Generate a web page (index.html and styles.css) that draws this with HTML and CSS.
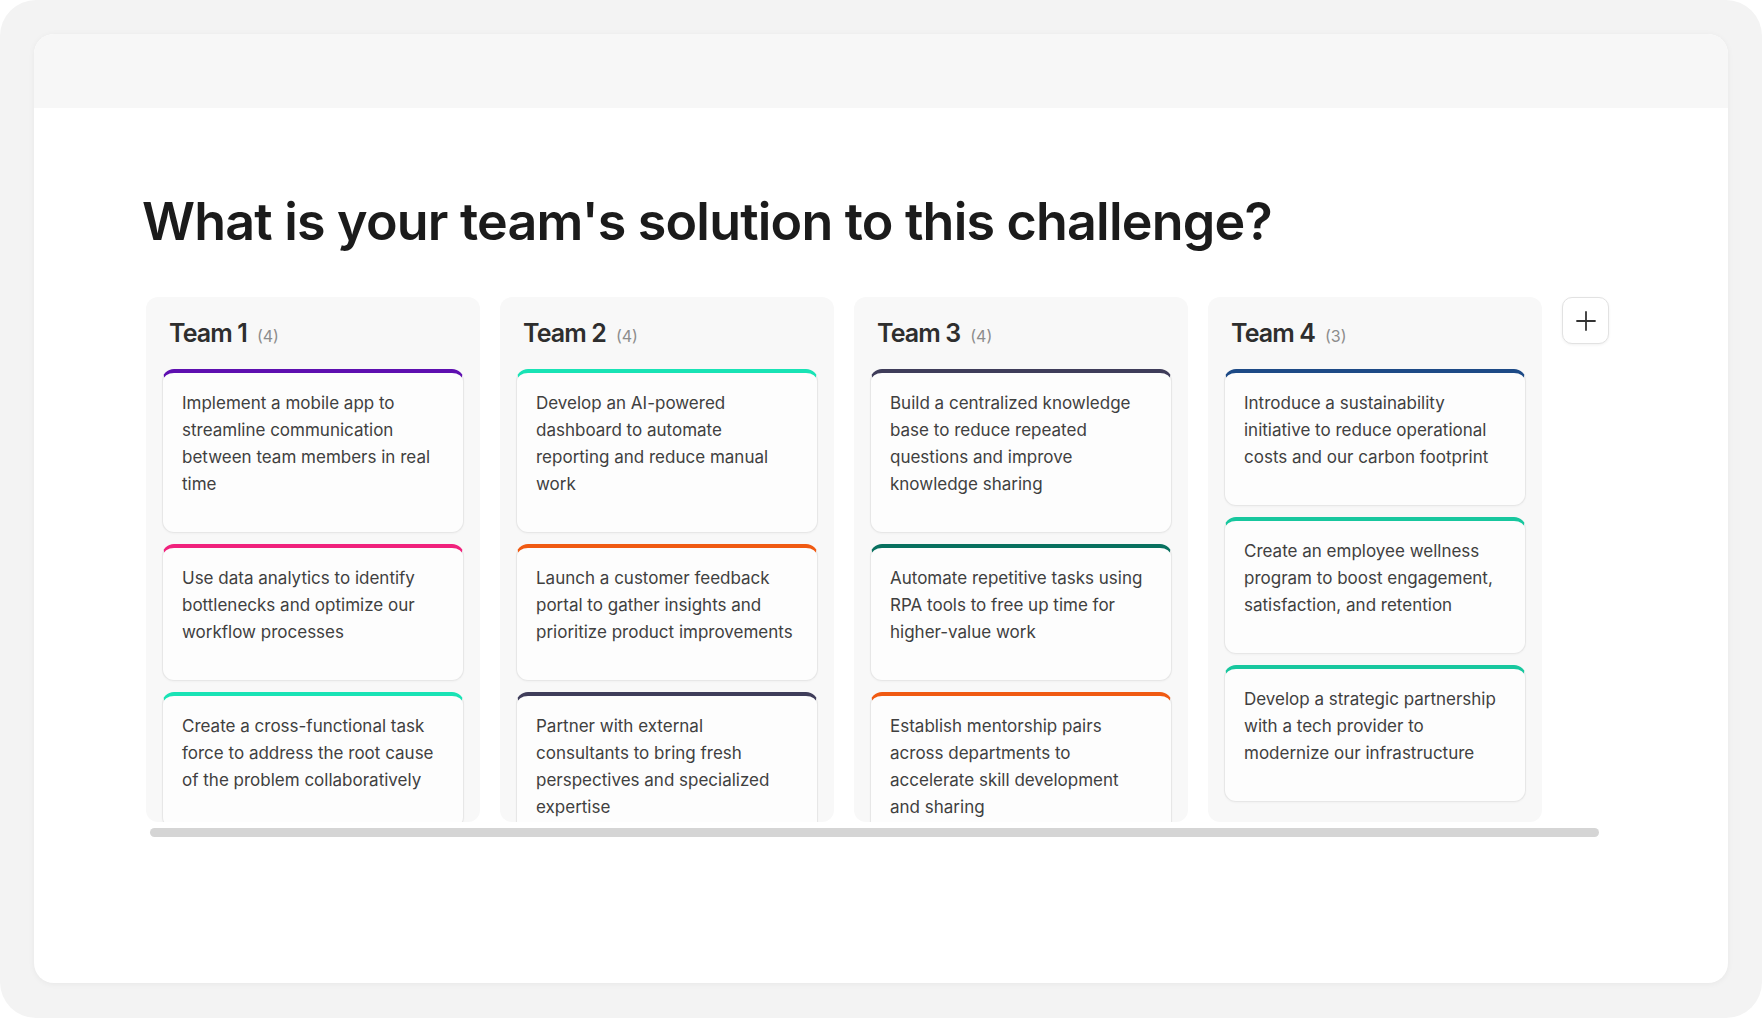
FILE: index.html
```html
<!DOCTYPE html>
<html lang="en">
<head>
<meta charset="utf-8">
<title>Team solutions</title>
<link rel="stylesheet" href="styles.css">
</head>
<body>
<div class="frame">
  <div class="window">
    <div class="window-bar"></div>
    <main class="content">
      <h1 class="title">What is your team's solution to this challenge?</h1>
      <div class="board">
        <div class="columns">
          <section class="column">
            <header class="col-head"><span class="col-name">Team 1</span><span class="col-count">(4)</span></header>
            <div class="cards">
              <article class="card c-purple">Implement a mobile app to streamline communication between team members in real time</article>
              <article class="card c-pink">Use data analytics to identify bottlenecks and optimize our workflow processes</article>
              <article class="card c-mint">Create a cross-functional task force to address the root cause of the problem collaboratively</article>
            </div>
          </section>
          <section class="column">
            <header class="col-head"><span class="col-name">Team 2</span><span class="col-count">(4)</span></header>
            <div class="cards">
              <article class="card c-mint">Develop an AI-powered dashboard to automate reporting and reduce manual work</article>
              <article class="card c-orange">Launch a customer feedback portal to gather insights and prioritize product improvements</article>
              <article class="card c-slate">Partner with external consultants to bring fresh perspectives and specialized expertise</article>
            </div>
          </section>
          <section class="column">
            <header class="col-head"><span class="col-name">Team 3</span><span class="col-count">(4)</span></header>
            <div class="cards">
              <article class="card c-slate">Build a centralized knowledge base to reduce repeated questions and improve knowledge sharing</article>
              <article class="card c-deepteal">Automate repetitive tasks using RPA tools to free up time for higher-value work</article>
              <article class="card c-orange">Establish mentorship pairs across departments to accelerate skill development and sharing</article>
            </div>
          </section>
          <section class="column">
            <header class="col-head"><span class="col-name">Team 4</span><span class="col-count">(3)</span></header>
            <div class="cards">
              <article class="card c-navy">Introduce a sustainability initiative to reduce operational costs and our carbon footprint</article>
              <article class="card c-green">Create an employee wellness program to boost engagement, satisfaction, and retention</article>
              <article class="card c-green">Develop a strategic partnership with a tech provider to modernize our infrastructure</article>
            </div>
          </section>
          <button class="add-btn" type="button" aria-label="Add team">
            <svg width="22" height="22" viewBox="0 0 22 22" fill="none" stroke="#333" stroke-width="1.8" stroke-linecap="round"><path d="M11 2v18M2 11h18"/></svg>
          </button>
        </div>
        <div class="scrollbar"></div>
      </div>
    </main>
  </div>
</div>
</body>
</html>
```
FILE: styles.css
```css
* { box-sizing: border-box; }

html, body {
  margin: 0;
  padding: 0;
  background: #ffffff;
}

body {
  font-family: Inter, "Noto Sans", "Liberation Sans", sans-serif;
  width: 1762px;
  height: 1018px;
  overflow: hidden;
}

.frame {
  width: 1762px;
  height: 1018px;
  background: #f3f3f3;
  border-radius: 36px;
  padding: 34px 34px 35px 34px;
}

.window {
  height: 949px;
  background: #ffffff;
  border-radius: 20px;
  box-shadow: 0 1px 6px rgba(0, 0, 0, 0.05);
  overflow: hidden;
}

.window-bar {
  height: 74px;
  background: #f7f7f7;
}

.content {
  padding: 82px 0 0 108px;
}

.title {
  margin: 0;
  font-size: 52px;
  line-height: 64px;
  font-weight: 600;
  letter-spacing: -0.8px;
  color: #1b1b1b;
}

.board {
  margin-top: 43px;
  padding-left: 4px;
}

.columns {
  display: flex;
  align-items: flex-start;
  gap: 20px;
}

.column {
  flex: 0 0 334px;
  height: 525px;
  overflow: hidden;
  background: #f8f8f8;
  border-radius: 12px;
  padding: 0 16px 20px 16px;
}

.col-head {
  display: flex;
  align-items: baseline;
  padding: 21px 7px 21px 7px;
  height: 72px;
}

.col-name {
  font-size: 25px;
  line-height: 30px;
  font-weight: 600;
  letter-spacing: -0.9px;
  color: #2e2e2e;
}

.col-count {
  margin-left: 10px;
  font-size: 16px;
  color: #8c8c8c;
}

.cards {
  display: flex;
  flex-direction: column;
  gap: 11px;
}

.card {
  background: #fdfdfd;
  border: 1px solid #e7e7e7;
  border-top: 4px solid #ccc;
  border-radius: 12px;
  padding: 17px 18.5px 34px 19px;
  font-size: 17px;
  line-height: 27px;
  color: #404040;
  box-shadow: 0 1px 2px rgba(0, 0, 0, 0.03);
}

.c-purple { border-top-color: #5e0fb0; }
.c-pink { border-top-color: #f0217c; }
.c-mint { border-top-color: #19e3b5; }
.c-orange { border-top-color: #f05a12; }
.c-slate { border-top-color: #3f3d5a; }
.c-deepteal { border-top-color: #08705f; }
.c-navy { border-top-color: #1d4a86; }
.c-green { border-top-color: #17c79e; }

.add-btn {
  flex: 0 0 47px;
  width: 47px;
  height: 47px;
  margin-left: 0;
  display: flex;
  align-items: center;
  justify-content: center;
  padding: 0;
  background: #ffffff;
  border: 1px solid #e2e2e2;
  border-radius: 10px;
  box-shadow: 0 1px 3px rgba(0, 0, 0, 0.06);
  cursor: pointer;
}

.scrollbar {
  margin-top: 6px;
  margin-left: 4px;
  width: 1449px;
  height: 9px;
  border-radius: 5px;
  background: #d5d5d5;
}
```
